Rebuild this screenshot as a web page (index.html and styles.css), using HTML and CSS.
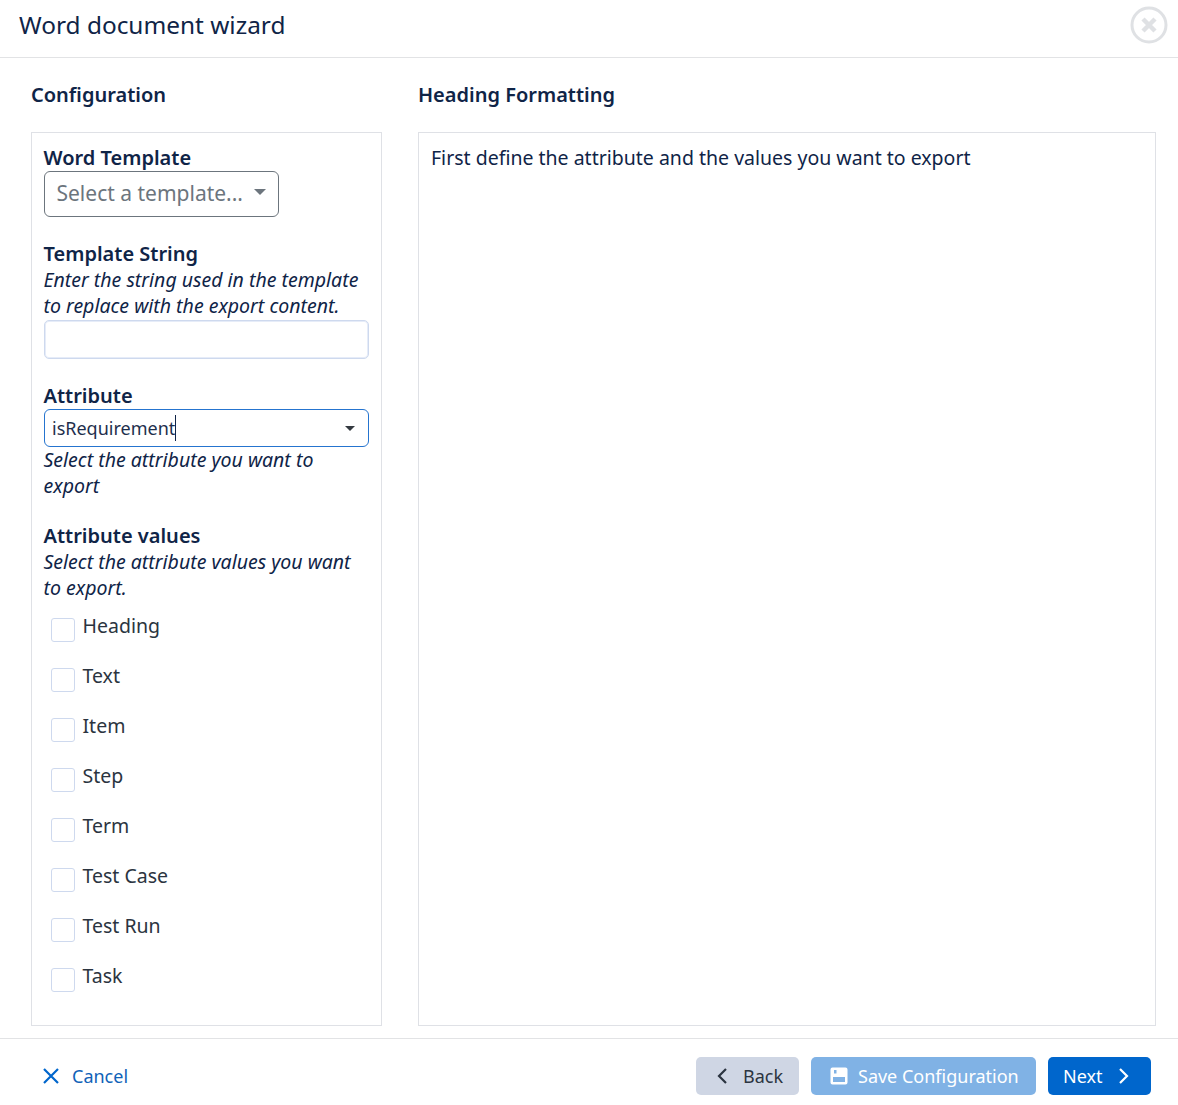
FILE: index.html
```html
<!DOCTYPE html>
<html lang="en">
<head>
    <meta charset="UTF-8">
    <title>Word document wizard</title>
    <link rel="stylesheet" href="styles.css">
</head>
<body>
    <div class="wizard">
        <div class="wizard-header">
            <h1>Word document wizard</h1>
            <button class="close-button" aria-label="Close">
                <svg width="38" height="38" viewBox="0 0 38 38"><circle cx="19" cy="19" r="17" fill="none" stroke="#dfe1e4" stroke-width="3"/><path d="M13 13L25 25M25 13L13 25" fill="none" stroke="#dfe1e4" stroke-width="4.5"/></svg>
            </button>
        </div>

        <div class="wizard-body">
            <div class="column config-column">
                <h2>Configuration</h2>
                <div class="panel config-panel">
                    <div class="field field-template">
                        <label>Word Template</label>
                        <div class="template-select">
                            <span>Select a template...</span>
                            <span class="caret caret-grey"></span>
                        </div>
                    </div>
                    <div class="field field-string">
                        <label>Template String</label>
                        <p class="hint">Enter the string used in the template to replace with the export content.</p>
                        <div class="text-input"></div>
                    </div>
                    <div class="field field-attribute">
                        <label>Attribute</label>
                        <div class="attribute-select">
                            <span class="attribute-value">isRequirement</span>
                            <span class="caret"></span>
                        </div>
                        <p class="hint">Select the attribute you want to export</p>
                    </div>
                    <div class="field">
                        <label>Attribute values</label>
                        <p class="hint">Select the attribute values you want to export.</p>
                        <ul class="check-list">
                            <li><span class="checkbox"></span>Heading</li>
                            <li><span class="checkbox"></span>Text</li>
                            <li><span class="checkbox"></span>Item</li>
                            <li><span class="checkbox"></span>Step</li>
                            <li><span class="checkbox"></span>Term</li>
                            <li><span class="checkbox"></span>Test Case</li>
                            <li><span class="checkbox"></span>Test Run</li>
                            <li><span class="checkbox"></span>Task</li>
                        </ul>
                    </div>
                </div>
            </div>
            <div class="column format-column">
                <h2>Heading Formatting</h2>
                <div class="panel format-panel">First define the attribute and the values you want to export</div>
            </div>
        </div>

        <div class="wizard-footer">
            <button class="btn btn-link">
                <svg width="18" height="18" viewBox="0 0 18 18"><path d="M2 2L16 16M16 2L2 16" fill="none" stroke="#0066cc" stroke-width="2.2"/></svg>
                Cancel
            </button>
            <div class="footer-actions">
                <button class="btn btn-back">
                    <svg width="12" height="18" viewBox="0 0 12 18"><path d="M10 2L3 9L10 16" fill="none" stroke="#2b3440" stroke-width="2.2"/></svg>
                    Back
                </button>
                <button class="btn btn-save">
                    <svg width="18" height="18" viewBox="0 0 18 18"><path fill-rule="evenodd" d="M2.500 .5h13a2 2 0 0 1 2 2v13a2 2 0 0 1-2 2h-13a2 2 0 0 1-2-2v-13a2 2 0 0 1 2-2zM4 3v3.500h2.500V3zM3 10v5h12v-5z" fill="#fff"/></svg>
                    Save Configuration
                </button>
                <button class="btn btn-next">
                    Next
                    <svg width="12" height="18" viewBox="0 0 12 18"><path d="M2 2L9 9L2 16" fill="none" stroke="#fff" stroke-width="2.2"/></svg>
                </button>
            </div>
        </div>
    </div>
</body>
</html>
```
FILE: styles.css
```css
* {
    box-sizing: border-box;
}

body {
    margin: 0;
    font-family: "Noto Sans", sans-serif;
    color: #0f2447;
    background: white;
}

.wizard {
    width: 1178px;
    height: 1105px;
    display: flex;
    flex-direction: column;
    overflow: hidden;
}

.wizard-header {
    height: 58px;
    flex: none;
    display: flex;
    justify-content: space-between;
    padding: 6px 9px 0 19px;
    border-bottom: 1px solid #e2e3e5;
}

.wizard-header h1 {
    margin: 0;
    font-size: 24.4px;
    font-weight: 400;
    line-height: 38px;
}

.close-button {
    width: 40px;
    height: 40px;
    border: none;
    background: none;
    padding: 0;
}

.wizard-body {
    flex: 1;
    display: flex;
    gap: 36px;
    padding: 0 22px 12px 31px;
    min-height: 0;
}

.column {
    display: flex;
    flex-direction: column;
}

.config-column {
    width: 351px;
    flex: none;
}

.format-column {
    flex: 1;
}

.column h2 {
    margin: 0;
    height: 74px;
    padding-top: 23px;
    font-size: 20px;
    font-weight: 600;
    line-height: 27px;
}

.panel {
    flex: 1;
    border: 1px solid #dfe1e6;
    font-size: 19.5px;
    line-height: 26px;
}

.config-panel {
    padding: 12px;
}

.format-panel {
    padding: 12px;
}

.field label {
    display: block;
    margin-left: -0.5px;
    font-size: 20px;
    font-weight: 600;
    line-height: 26px;
}

.field-template {
    height: 96px;
}

.field-string {
    height: 142px;
}

.field-attribute {
    height: 140px;
}

.hint {
    margin: 0 0 0 -0.5px;
    font-size: 19.5px;
    font-style: italic;
    line-height: 26px;
}

.template-select {
    width: 235px;
    height: 46px;
    display: flex;
    align-items: center;
    justify-content: space-between;
    padding: 0 12px 2px 11.5px;
    border: 1px solid #6c757d;
    border-radius: 6px;
    color: #6c757d;
    font-size: 21px;
}

.caret {
    width: 0;
    height: 0;
    border-left: 5px solid transparent;
    border-right: 5px solid transparent;
    border-top: 5px solid #343a40;
}

.caret-grey {
    border-left-width: 6px;
    border-right-width: 6px;
    border-top: 6px solid #6c757d;
    margin-top: -2px;
}

.text-input {
    width: 325px;
    height: 39px;
    margin-top: 1px;
    border: 1px solid #ced9ee;
    border-radius: 5px;
    box-shadow: inset 0 0 0 1px #e6ecf8;
}

.attribute-select {
    width: 325px;
    height: 38px;
    display: flex;
    align-items: center;
    justify-content: space-between;
    padding: 0 13px 0 7px;
    border: 1px solid #2574cf;
    border-radius: 6px;
    font-size: 18px;
    color: #1e2f4d;
}

.attribute-value {
    border-right: 1px solid #0f2447;
    line-height: 26px;
}

.check-list {
    list-style: none;
    margin: 0;
    padding: 0;
}

.check-list li {
    height: 50px;
    display: flex;
    padding-left: 7px;
    color: #2b3440;
    font-size: 19.5px;
    line-height: 26px;
    padding-top: 12px;
}

.checkbox {
    width: 24px;
    height: 24px;
    margin: 5px 7.5px 0 0;
    border: 1px solid #ced9ee;
    border-radius: 3px;
}

.wizard-footer {
    height: 67px;
    flex: none;
    display: flex;
    justify-content: space-between;
    align-items: flex-start;
    padding: 18px 27px 0 42px;
    border-top: 1px solid #e2e3e5;
}

.footer-actions {
    display: flex;
    gap: 12px;
}

.btn {
    height: 38px;
    display: flex;
    align-items: center;
    border: none;
    border-radius: 5px;
    font-family: inherit;
    font-size: 18px;
    padding: 0 16px;
    white-space: nowrap;
}

.btn svg {
    flex: none;
}

.btn-link {
    background: none;
    color: #0f62b8;
    padding: 0;
    gap: 12px;
}

.btn-back {
    width: 103px;
    gap: 15px;
    padding-left: 20px;
    background: #cfd6e4;
    color: #2b3440;
}

.btn-save {
    width: 225px;
    gap: 10px;
    background: #80b2e5;
    color: white;
    padding-left: 19px;
}

.btn-next {
    width: 103px;
    gap: 15px;
    padding-left: 15px;
    background: #0066cc;
    color: white;
}
```
